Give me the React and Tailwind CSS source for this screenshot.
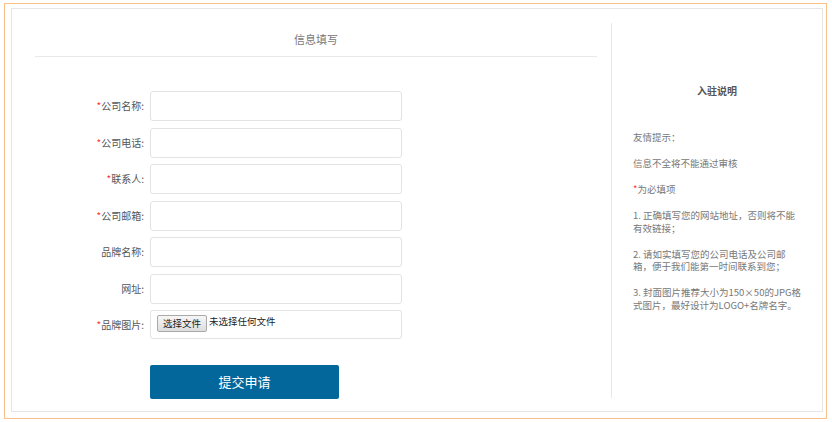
const FONT = "font-['Noto_Sans_CJK_SC','Noto_Sans',sans-serif]";

const fields = [
  { label: "公司名称", required: true },
  { label: "公司电话", required: true },
  { label: "联系人", required: true },
  { label: "公司邮箱", required: true },
  { label: "品牌名称", required: false },
  { label: "网址", required: false },
];

function Label({ text, required }) {
  return (
    <div className="w-[109px] shrink-0 text-right text-[10px] leading-[30px] text-[#555]">
      {required && <span className="text-[#f33]">*</span>}
      {text}:
    </div>
  );
}

export default function App() {
  return (
    <div className={`w-[832px] h-[422px] bg-white overflow-hidden ${FONT}`}>
      <div className="ml-[4px] mt-[3px] w-[823px] h-[416px] border border-[#f9c08a] pl-[6px] pt-[4px]">
        <div className="w-[812px] h-[404px] border border-[#e6e6e6] flex">
          {/* Left: form */}
          <div className="ml-[23px] w-[562px] flex flex-col">
            <div className="pt-[23px] pb-[9px] border-b border-[#e8e8e8] text-center text-[11px] leading-[15px] text-[#777]">
              信息填写
            </div>

            <div className="mt-[34px] flex flex-col gap-[6.5px]">
              {fields.map((f) => (
                <div key={f.label} className="flex items-start">
                  <Label text={f.label} required={f.required} />
                  <div className="ml-[6px] w-[252px] h-[30px] border border-[#e3e3e3] rounded-[3px] bg-white" />
                </div>
              ))}
              <div className="flex items-start">
                <Label text="品牌图片" required />
                <div className="ml-[6px] w-[252px] h-[29px] border border-[#e3e3e3] rounded-[3px] bg-white flex items-start pt-[4px] pl-[6px]">
                  <div className="h-[17px] px-[5px] border border-[#a9a9a9] rounded-[2px] bg-gradient-to-b from-[#f6f6f6] to-[#dedede] text-[9.5px] leading-[15px] text-[#222]">
                    选择文件
                  </div>
                  <span className="ml-[2px] text-[9.5px] leading-[12px] text-[#222]">
                    未选择任何文件
                  </span>
                </div>
              </div>
            </div>

            <button className="mt-[25px] ml-[115px] w-[189px] h-[34px] rounded-[2px] bg-[#04679b] text-white text-[13px] leading-[34px] text-center">
              提交申请
            </button>
          </div>

          {/* Right: notes */}
          <div className="ml-[14px] mt-[14px] w-[211px] h-[375px] border-l border-[#e8e8e8] text-[#777]">
            <div className="mt-[61px] text-center text-[10px] font-bold leading-[14px] text-[#555]">
              入驻说明
            </div>
            <div className="mt-[33px] pl-[21px] text-[9.5px] leading-[12.5px] flex flex-col gap-[13.5px]">
              <p>友情提示：</p>
              <p>信息不全将不能通过审核</p>
              <p>
                <span className="text-[#f33]">*</span>为必填项
              </p>
              <p>
                1. 正确填写您的网站地址，否则将不能
                <br />
                有效链接；
              </p>
              <p>
                2. 请如实填写您的公司电话及公司邮
                <br />
                箱，便于我们能第一时间联系到您；
              </p>
              <p>
                3. 封面图片推荐大小为150×50的JPG格
                <br />
                式图片，最好设计为LOGO+名牌名字。
              </p>
            </div>
          </div>
        </div>
      </div>
    </div>
  );
}
